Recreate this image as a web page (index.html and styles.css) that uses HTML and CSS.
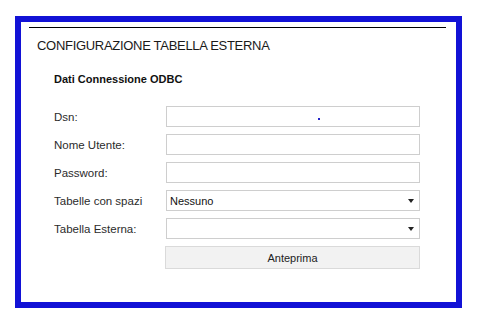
FILE: index.html
```html
<!DOCTYPE html>
<html>

<head>
  <title>Configurazione Tabella Esterna</title>
  <meta charset="utf-8" />
  <link rel="stylesheet" href="styles.css">
</head>

<body>
  <div class="frame">
    <div class="panel">
      <div class="rule"></div>
      <h1 class="title">CONFIGURAZIONE TABELLA ESTERNA</h1>
      <h2 class="section">Dati Connessione ODBC</h2>

      <div class="form">
        <label class="label">Dsn:</label>
        <div class="field"><span class="caret-dot"></span></div>

        <label class="label">Nome Utente:</label>
        <div class="field"></div>

        <label class="label">Password:</label>
        <div class="field"></div>

        <label class="label">Tabelle con spazi</label>
        <div class="field select">
          <span class="value">Nessuno</span>
          <span class="arrow"></span>
        </div>

        <label class="label">Tabella Esterna:</label>
        <div class="field select">
          <span class="value"></span>
          <span class="arrow"></span>
        </div>

        <span></span>
        <button class="button">Anteprima</button>
      </div>
    </div>
  </div>
</body>

</html>
```

FILE: styles.css
```css
body {
  margin: 0;
  background: #ffffff;
  font-family: "Liberation Sans", Arial, sans-serif;
  color: #222;
}

.frame {
  box-sizing: border-box;
  width: 447px;
  height: 292px;
  margin: 16px 0 0 15px;
  border: 6px solid #1212d6;
  background: #ffffff;
}

.panel {
  display: flex;
  flex-direction: column;
  padding-top: 5px;
}

.rule {
  height: 1px;
  width: 417px;
  margin-left: 8px;
  background: #000;
}

.title {
  margin: 10px 0 0 16px;
  font-size: 13px;
  line-height: 15px;
  font-weight: normal;
  letter-spacing: -0.3px;
  color: #1a1a1a;
}

.section {
  margin: 20px 0 0 33px;
  font-size: 11px;
  line-height: 13px;
  font-weight: bold;
  color: #111;
}

.form {
  display: grid;
  grid-template-columns: 112px 254px;
  row-gap: 7px;
  margin: 20px 0 0 33px;
}

.label {
  box-sizing: border-box;
  height: 21px;
  font-size: 11.5px;
  line-height: 19px;
  padding-top: 2px;
  color: #2b2b2b;
}

.field {
  box-sizing: border-box;
  height: 21px;
  border: 1px solid #cecece;
  background: #fff;
  display: flex;
  align-items: center;
}

.caret-dot {
  width: 2px;
  height: 2px;
  margin: 4px 0 0 151px;
  background: #2424c8;
}

.select {
  justify-content: space-between;
  padding: 0 5px 0 3px;
}

.value {
  font-size: 11px;
  color: #111;
  padding-top: 1px;
}

.arrow {
  width: 0;
  height: 0;
  border-left: 3.5px solid transparent;
  border-right: 3.5px solid transparent;
  border-top: 4px solid #222;
}

.button {
  box-sizing: border-box;
  height: 23px;
  width: 255px;
  margin-left: -1px;
  border: 1px solid #dadada;
  background: #f2f2f2;
  font-family: "Liberation Sans", Arial, sans-serif;
  font-size: 11px;
  color: #222;
  padding: 0;
}
```
